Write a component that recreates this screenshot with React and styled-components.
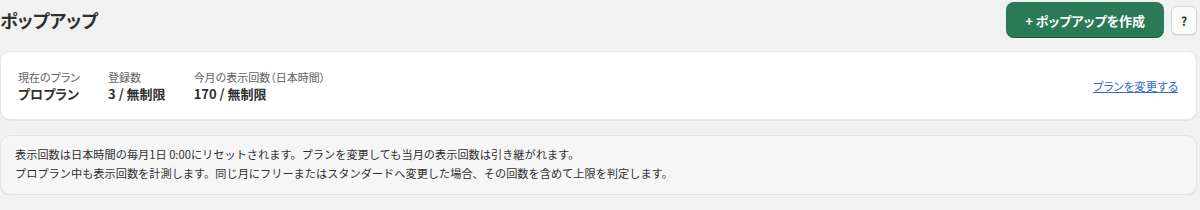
import React from 'react';
import styled, { createGlobalStyle } from 'styled-components';

const GlobalStyle = createGlobalStyle`
    body{
        margin:0;
        background:#f1f1f1;
        font-family:"Noto Sans CJK JP","Noto Sans",sans-serif;
        color:#303030;
    }
`

const Page = styled.div`
    width:1197px;
    padding:2px 0 0 0;
`
const Header = styled.div`
    display:flex;
    align-items:center;
    justify-content:space-between;
    height:36px;
`
const Title = styled.h1`
    margin:0;
    font-size:18px;
    font-weight:700;
    color:#303030;
    font-feature-settings:"palt";
`
const Actions = styled.div`
    display:flex;
    align-items:center;
    gap:7px;
`
const PrimaryButton = styled.button`
    height:36px;
    padding:0 19px;
    border:none;
    border-radius:8px;
    background:#2a7a55;
    color:#fff;
    font-family:inherit;
    font-size:13px;
    font-weight:600;
    box-shadow:inset 0 -1px 0 rgba(0,0,0,0.25);
    font-feature-settings:"palt";
`
const HelpButton = styled.button`
    width:26px;
    height:29px;
    padding:0;
    border:1px solid #d4d4d4;
    border-radius:6px;
    background:#fafafa;
    color:#303030;
    font-family:inherit;
    font-size:12px;
    font-weight:700;
    box-shadow:0 1px 0 rgba(0,0,0,0.06);
`
const Card = styled.div`
    margin-top:${props => props.$gap}px;
    background:${props => props.$muted ? '#f6f6f7' : '#fff'};
    border:1px solid ${props => props.$muted ? '#e3e3e3' : '#e6e6e6'};
    border-radius:10px;
    box-shadow:0 1px 0 rgba(0,0,0,0.05);
`
const PlanRow = styled.div`
    display:flex;
    align-items:center;
    justify-content:space-between;
    height:67px;
    padding:0 17px;
`
const Stats = styled.div`
    display:flex;
    gap:28px;
`
const Stat = styled.div`
    display:flex;
    flex-direction:column;
`
const Label = styled.span`
    font-size:11px;
    line-height:15px;
    color:#616161;
    font-feature-settings:"palt";
`
const Value = styled.span`
    font-size:13px;
    line-height:17px;
    font-weight:700;
    color:#303030;
    font-feature-settings:"palt";
`
const Link = styled.a`
    font-size:11.5px;
    color:#3a6bc4;
    text-decoration:underline;
    font-feature-settings:"palt";
    cursor:pointer;
    margin-right:1px;
`
const Notes = styled.div`
    padding:10px 14px 13px;
    display:flex;
    flex-direction:column;
    gap:3px;
`
const Note = styled.p`
    margin:0;
    font-size:11.2px;
    line-height:16px;
    color:#303030;
`

const stats = [
    { label: '現在のプラン', value: 'プロプラン' },
    { label: '登録数', value: '3 / 無制限' },
    { label: '今月の表示回数（日本時間）', value: '170 / 無制限' },
]

const App = () => {
    return (
        <Page>
            <GlobalStyle/>
            <Header>
                <Title>ポップアップ</Title>
                <Actions>
                    <PrimaryButton>+ ポップアップを作成</PrimaryButton>
                    <HelpButton>?</HelpButton>
                </Actions>
            </Header>
            <Card $gap={13}>
                <PlanRow>
                    <Stats>
                        {stats.map(s => (
                            <Stat key={s.label}>
                                <Label>{s.label}</Label>
                                <Value>{s.value}</Value>
                            </Stat>
                        ))}
                    </Stats>
                    <Link>プランを変更する</Link>
                </PlanRow>
            </Card>
            <Card $gap={15} $muted>
                <Notes>
                    <Note>表示回数は日本時間の毎月1日 0:00にリセットされます。プランを変更しても当月の表示回数は引き継がれます。</Note>
                    <Note>プロプラン中も表示回数を計測します。同じ月にフリーまたはスタンダードへ変更した場合、その回数を含めて上限を判定します。</Note>
                </Notes>
            </Card>
        </Page>
    )
}

export default App;
